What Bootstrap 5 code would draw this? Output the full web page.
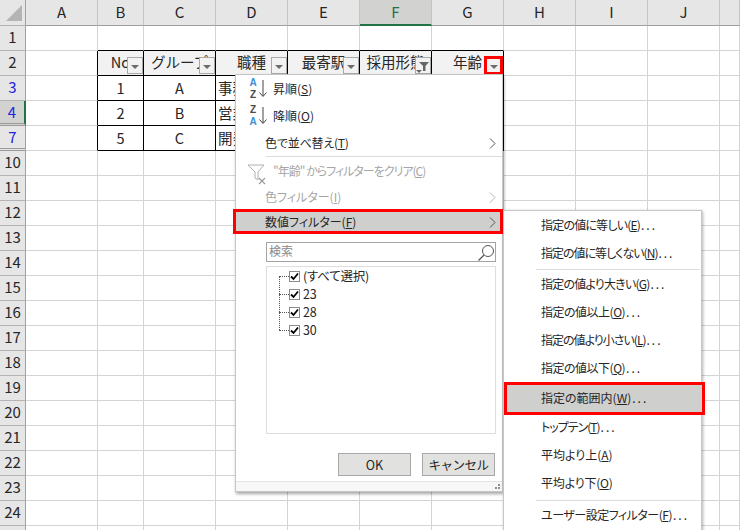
<!DOCTYPE html>
<html lang="ja">
<head>
<meta charset="utf-8">
<title>数値フィルター</title>
<link href="https://cdn.jsdelivr.net/npm/bootstrap@5.3.0/dist/css/bootstrap.min.css" rel="stylesheet">
<style>
html,body{margin:0;background:#fff;overflow:hidden}
body{width:740px;height:530px;position:relative;font-family:"Noto Sans CJK JP","Noto Sans",sans-serif;font-size:12px;color:#262626;font-feature-settings:"palt"}
.xsheet{width:740px;height:530px;overflow:hidden;font-feature-settings:normal}
.xrow{display:flex;height:25px}
.xrow>span{flex:0 0 72px;height:25px;border-right:1px solid #d4d4d4;border-bottom:1px solid #d4d4d4;font-size:14.5px;line-height:22px;text-align:center;white-space:nowrap;overflow:hidden;position:relative}
.xrow>span:nth-child(1){flex:0 0 26px;background:#e6e6e6;border-right:1px solid #a0a0a0;border-bottom:1px solid #b4b4b4;font-size:15px}
.xrow>span:nth-child(3){flex:0 0 46px}
.xrow>span:last-child{flex:0 0 20px}
.xhead{height:26px}
.xhead>span{height:26px;background:#e6e6e6;border-right:1px solid #c4c4c4;border-bottom:1px solid #9e9e9e;line-height:23px;font-size:15px}
.xhead>span.xcol-on{background:#d2d2d0;border-bottom:2px solid #217346;color:#217346}
.xcorner{display:flex;align-items:flex-start}
.xblue>span:nth-child(1){color:#2222dd}
.xrow>span.xrow-on{background:#d2d2d0;border-right:2px solid #217346}
.xgap>span:nth-child(1){border-bottom:3px double #9a9a9a}
.xrow>span.xb{border-right-color:#000}
.xrow>span.xt{border-bottom-color:#000}
.xrow>span.xth{background:#f2f2f2;border-bottom-color:#000;border-right-color:#000}
.xrow>span.xd{border-bottom-color:#000;border-right-color:#000;line-height:23px}
.xrow>span.xl{text-align:left;padding-left:2px}
.xfb{position:absolute;top:6px;right:0;width:16px;height:17px;background:#f2f2f2;border:1px solid #a9a9a9;display:flex;align-items:center;justify-content:center}
.xfb-red{top:5px;right:0;width:19px;height:19px;border:3px solid #f00}
.xtri{width:0;height:0;border-left:4px solid transparent;border-right:4px solid transparent;border-top:4px solid #6c6c6c;margin-top:3px}
.xmenu{position:absolute;left:235px;top:74px;width:268px;height:418px;background:#fff;border:1px solid #c6c6c6;box-shadow:1px 2px 3px rgba(0,0,0,.35);z-index:2}
.xsub{position:absolute;left:503px;top:210px;width:199px;height:340px;background:#fff;border:1px solid #c6c6c6;box-shadow:1px 1px 3px rgba(0,0,0,.3);z-index:3;padding-top:1px}
.xitem{display:flex;align-items:center;position:relative;color:#262626;white-space:nowrap;line-height:16px}
.xm0{height:27px}
.xm1{height:28px}
.xm2{height:27px}
.xm3{height:26px}
.xm4{height:25px}
.xdis{color:#a6a6a6}
.xtxt-a{padding-left:37px}
.xtxt-b{padding-left:29px}
.xchev{position:absolute;left:253px;top:50%;margin-top:-5px}
.xsep{height:1px;background:#dcdcdc;margin-left:30px}
.xselm{height:25px;background:#cfcfcd;outline:3px solid #f00;outline-offset:-3px;margin:0 -3px 0 -3px;padding-left:32px;width:270px}
.xchev-s{left:256px}
.xico{position:absolute;left:12px;top:2px;width:22px;height:24px}
.xico b{position:absolute;left:0;width:10px;text-align:center;font-size:10px;line-height:11.5px;font-weight:700;font-family:"Liberation Sans",sans-serif}
.xico b.xtop{top:0}
.xico b.xbot{top:11.5px}
.xico b.xa{color:#3b8fd8}
.xico b.xz{color:#4a4a4a}
.xico svg{position:absolute;left:11px;top:3px}
.xclr{top:5px;left:11px}
.xsearch{margin:8px 0 0 30px;width:230px;height:20px;border:1px solid #a3a3a3;color:#8a8a8a;padding-left:2px;line-height:16px}
.xsearch svg{position:absolute;right:0;top:1px}
.xtree{margin:4px 0 0 30px;width:230px;height:168px;border:1px solid #dedede;position:relative;letter-spacing:-.25px}
.xnode{height:18px;display:flex;align-items:center;padding-left:22px;gap:3px;font-size:12.5px;line-height:16px;position:relative}
.xnode::before{content:"";position:absolute;left:12px;top:9px;width:10px;border-top:1px dotted #555}
.xvline{position:absolute;left:12px;top:9px;height:54px;border-left:1px dotted #555}
.xcheck{width:11px;height:11px;border:1px solid #8c8c8c;background:#fff;display:flex;flex:none}
.xbtns{display:flex;justify-content:flex-end;gap:11px;margin-top:19px;padding-right:7px}
.xbtns .btn{width:73px;height:23px;padding:0;border-radius:0;background:#e1e1df;border:1px solid #a8a8a8;color:#262626;font-size:12.5px;line-height:20px}
.xcancel{letter-spacing:-.5px}
.xfoot{position:absolute;left:0;right:0;bottom:0;height:10px;border-top:1px solid #dfe5e8;background:#f7f7f7}
.xgrip{position:absolute;right:2px;bottom:2px;display:grid;grid-template-columns:2px 2px;gap:1px}
.xgrip i{width:2px;height:2px;background:#8f8f8f}
.xgrip i:first-child{background:transparent}
.xsitem{height:28px;padding:0 0 2px 37px;display:flex;align-items:center;white-space:nowrap;color:#262626;line-height:16px}
.xdots{letter-spacing:2px;margin-left:1px}
.xssep{height:1px;background:#dcdcdc;margin:1px 1px 0 32px}
.xssep+.xsitem{margin-top:1px}
.xsred{height:33px;background:#cfcfcd;outline:3px solid #f00;outline-offset:-3px;margin:-1px -3px -1px 0;width:201px}
.xls1{letter-spacing:-.2px}
.xls2{letter-spacing:-.5px}
.xls3{letter-spacing:-.8px}
.xls4{letter-spacing:-1px}
</style>
</head>
<body>
<div class="xsheet">
<div class="xrow xhead"><span class="xcorner"><svg width="25" height="25" viewBox="0 0 25 25"><polygon points="22,5 22,21 6,21" fill="#b4b4b4"/></svg></span><span>A</span><span>B</span><span>C</span><span>D</span><span>E</span><span class="xcol-on">F</span><span>G</span><span>H</span><span>I</span><span>J</span><span></span></div>
<div class="xrow"><span>1</span><span></span><span class="xt"></span><span class="xt"></span><span class="xt"></span><span class="xt"></span><span class="xt"></span><span class="xt"></span><span></span><span></span><span></span><span></span></div>
<div class="xrow"><span>2</span><span class="xb"></span>
<span class="xth">No<em class="xfb"><i class="xtri"></i></em></span>
<span class="xth">グループ<em class="xfb"><i class="xtri"></i></em></span>
<span class="xth">職種<em class="xfb"><i class="xtri"></i></em></span>
<span class="xth">最寄駅<em class="xfb"><i class="xtri"></i></em></span>
<span class="xth">採用形態<em class="xfb"><svg width="14" height="14" viewBox="0 0 14 14"><path d="M3 3H13L9.5 7V12H7V7Z" fill="#666"/><path d="M0 11H6L3 14Z" fill="#666"/></svg></em></span>
<span class="xth">年齢<em class="xfb xfb-red"><i class="xtri"></i></em></span>
<span></span><span></span><span></span><span></span></div>
<div class="xrow xblue"><span>3</span><span class="xb"></span><span class="xd">1</span><span class="xd">A</span><span class="xd xl">事務</span><span class="xd"></span><span class="xd"></span><span class="xd"></span><span></span><span></span><span></span><span></span></div>
<div class="xrow xblue xgap"><span class="xrow-on">4</span><span class="xb"></span><span class="xd">2</span><span class="xd">B</span><span class="xd xl">営業</span><span class="xd"></span><span class="xd"></span><span class="xd"></span><span></span><span></span><span></span><span></span></div>
<div class="xrow xblue xgap"><span>7</span><span class="xb"></span><span class="xd">5</span><span class="xd">C</span><span class="xd xl">開発</span><span class="xd"></span><span class="xd"></span><span class="xd"></span><span></span><span></span><span></span><span></span></div>
<div class="xrow"><span>10</span><span></span><span></span><span></span><span></span><span></span><span></span><span></span><span></span><span></span><span></span><span></span></div>
<div class="xrow"><span>11</span><span></span><span></span><span></span><span></span><span></span><span></span><span></span><span></span><span></span><span></span><span></span></div>
<div class="xrow"><span>12</span><span></span><span></span><span></span><span></span><span></span><span></span><span></span><span></span><span></span><span></span><span></span></div>
<div class="xrow"><span>13</span><span></span><span></span><span></span><span></span><span></span><span></span><span></span><span></span><span></span><span></span><span></span></div>
<div class="xrow"><span>14</span><span></span><span></span><span></span><span></span><span></span><span></span><span></span><span></span><span></span><span></span><span></span></div>
<div class="xrow"><span>15</span><span></span><span></span><span></span><span></span><span></span><span></span><span></span><span></span><span></span><span></span><span></span></div>
<div class="xrow"><span>16</span><span></span><span></span><span></span><span></span><span></span><span></span><span></span><span></span><span></span><span></span><span></span></div>
<div class="xrow"><span>17</span><span></span><span></span><span></span><span></span><span></span><span></span><span></span><span></span><span></span><span></span><span></span></div>
<div class="xrow"><span>18</span><span></span><span></span><span></span><span></span><span></span><span></span><span></span><span></span><span></span><span></span><span></span></div>
<div class="xrow"><span>19</span><span></span><span></span><span></span><span></span><span></span><span></span><span></span><span></span><span></span><span></span><span></span></div>
<div class="xrow"><span>20</span><span></span><span></span><span></span><span></span><span></span><span></span><span></span><span></span><span></span><span></span><span></span></div>
<div class="xrow"><span>21</span><span></span><span></span><span></span><span></span><span></span><span></span><span></span><span></span><span></span><span></span><span></span></div>
<div class="xrow"><span>22</span><span></span><span></span><span></span><span></span><span></span><span></span><span></span><span></span><span></span><span></span><span></span></div>
<div class="xrow"><span>23</span><span></span><span></span><span></span><span></span><span></span><span></span><span></span><span></span><span></span><span></span><span></span></div>
<div class="xrow"><span>24</span><span></span><span></span><span></span><span></span><span></span><span></span><span></span><span></span><span></span><span></span><span></span></div>
<div class="xrow"><span></span><span></span><span></span><span></span><span></span><span></span><span></span><span></span><span></span><span></span><span></span><span></span></div>
</div>

<div class="xmenu">
  <div class="xitem xm0 xtxt-a"><span class="xico"><b class="xa xtop">A</b><b class="xz xbot">Z</b><svg width="8" height="18" viewBox="0 0 8 18"><path d="M4 0V16M0.5 12.5L4 16.5L7.5 12.5" fill="none" stroke="#444" stroke-width="1"/></svg></span>昇順(<u>S</u>)</div>
  <div class="xitem xm1 xtxt-a"><span class="xico"><b class="xz xtop">Z</b><b class="xa xbot">A</b><svg width="8" height="18" viewBox="0 0 8 18"><path d="M4 0V16M0.5 12.5L4 16.5L7.5 12.5" fill="none" stroke="#444" stroke-width="1"/></svg></span>降順(<u>O</u>)</div>
  <div class="xitem xm3 xtxt-b xls1">色で並べ替え(<u>T</u>)<svg class="xchev" width="7" height="11" viewBox="0 0 7 11"><path d="M1 0.5L6 5.5L1 10.5" fill="none" stroke="#555"/></svg></div>
  <div class="xsep"></div>
  <div class="xitem xm2 xtxt-a xdis xls4"><svg class="xico xclr" width="22" height="22" viewBox="0 0 22 22"><path d="M1 2H17L11 9V17L8 15V9Z" fill="none" stroke="#b0b0b0"/><path d="M12 15L18 21M18 15L12 21" stroke="#9a9a9a" stroke-width="1.2"/></svg>"年齢" からフィルターをクリア(<u>C</u>)</div>
  <div class="xitem xm4 xtxt-b xdis">色フィルター(<u>I</u>)<svg class="xchev" width="7" height="11" viewBox="0 0 7 11"><path d="M1 0.5L6 5.5L1 10.5" fill="none" stroke="#b0b0b0"/></svg></div>
  <div class="xitem xselm">数値フィルター(<u>F</u>)<svg class="xchev xchev-s" width="7" height="11" viewBox="0 0 7 11"><path d="M1 0.5L6 5.5L1 10.5" fill="none" stroke="#555"/></svg></div>
  <div class="xsearch position-relative">検索<svg width="18" height="18" viewBox="0 0 18 18"><circle cx="11" cy="7" r="5.5" fill="none" stroke="#555"/><path d="M7 11L1.5 16.5" stroke="#555" stroke-width="1.2"/></svg></div>
  <div class="xtree">
    <i class="xvline"></i>
    <div class="xnode"><span class="xcheck"><svg width="9" height="9" viewBox="0 0 9 9"><path d="M1 4.5L3.5 7L8 1.5" fill="none" stroke="#000" stroke-width="1.8"/></svg></span>(すべて選択)</div>
    <div class="xnode"><span class="xcheck"><svg width="9" height="9" viewBox="0 0 9 9"><path d="M1 4.5L3.5 7L8 1.5" fill="none" stroke="#000" stroke-width="1.8"/></svg></span>23</div>
    <div class="xnode"><span class="xcheck"><svg width="9" height="9" viewBox="0 0 9 9"><path d="M1 4.5L3.5 7L8 1.5" fill="none" stroke="#000" stroke-width="1.8"/></svg></span>28</div>
    <div class="xnode"><span class="xcheck"><svg width="9" height="9" viewBox="0 0 9 9"><path d="M1 4.5L3.5 7L8 1.5" fill="none" stroke="#000" stroke-width="1.8"/></svg></span>30</div>
  </div>
  <div class="xbtns"><button class="btn">OK</button><button class="btn xcancel">キャンセル</button></div>
  <div class="xfoot"><span class="xgrip"><i></i><i></i><i></i><i></i></span></div>
</div>

<div class="xsub">
  <div class="xsitem xls3">指定の値に等しい(<u>E</u>)<span class="xdots">...</span></div>
  <div class="xsitem xls4">指定の値に等しくない(<u>N</u>)<span class="xdots">...</span></div>
  <div class="xssep"></div>
  <div class="xsitem xls3">指定の値より大きい(<u>G</u>)<span class="xdots">...</span></div>
  <div class="xsitem xls2">指定の値以上(<u>O</u>)<span class="xdots">...</span></div>
  <div class="xsitem xls4">指定の値より小さい(<u>L</u>)<span class="xdots">...</span></div>
  <div class="xsitem xls2">指定の値以下(<u>Q</u>)<span class="xdots">...</span></div>
  <div class="xsitem xsred">指定の範囲内(<u>W</u>)<span class="xdots">...</span></div>
  <div class="xsitem xls4">トップテン(<u>T</u>)<span class="xdots">...</span></div>
  <div class="xsitem">平均より上(<u>A</u>)</div>
  <div class="xsitem xls1">平均より下(<u>O</u>)</div>
  <div class="xssep" style="margin-top:2px"></div>
  <div class="xsitem xls2">ユーザー設定フィルター(<u>F</u>)<span class="xdots">...</span></div>
</div>
<script src="https://cdn.jsdelivr.net/npm/bootstrap@5.3.0/dist/js/bootstrap.bundle.min.js"></script>
</body>
</html>
